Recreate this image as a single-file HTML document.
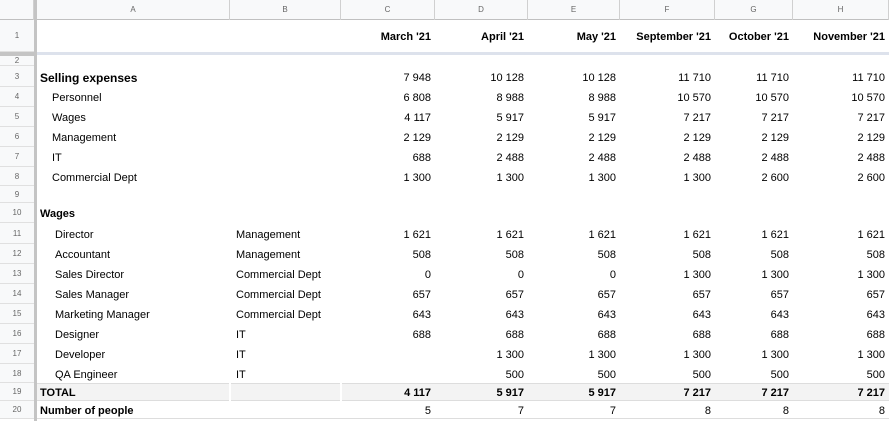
<!DOCTYPE html>
<html><head><meta charset="utf-8"><style>
*{margin:0;padding:0;box-sizing:border-box}
body{width:889px;height:421px;overflow:hidden;background:#fff;font-family:"Liberation Sans",Arial,sans-serif;font-size:11px;color:#000;position:relative}
.hdr{position:absolute;left:0;top:0;width:889px;height:20px;background:#f8f9fa;border-bottom:1px solid #c0c0c0}
.hdr div{position:absolute;top:0;height:20px;line-height:20px;text-align:center;font-size:8px;color:#666;border-right:1px solid #d0d0d0}
.rh{position:absolute;left:0;width:34px;background:#f8f9fa;border-bottom:1px solid #e0e0e0;font-size:8px;color:#666;text-align:center}
.r{position:absolute;left:37px;width:852px}
.c{position:absolute;top:1px;height:100%;white-space:nowrap;display:flex;align-items:center}
.n{justify-content:flex-end;padding-right:4px}
.b{font-weight:bold}
</style></head><body>
<div class="hdr">
<div style="left:0;width:34px"></div>
<div style="left:37px;width:193px">A</div>
<div style="left:230px;width:111px">B</div>
<div style="left:341px;width:94px">C</div>
<div style="left:435px;width:93px">D</div>
<div style="left:528px;width:92px">E</div>
<div style="left:620px;width:95px">F</div>
<div style="left:715px;width:78px">G</div>
<div style="left:793px;width:96px">H</div>
</div>
<div style="position:absolute;left:34px;top:0;width:3px;height:421px;background:#c4c4c4"></div>
<div style="position:absolute;left:0;top:52px;width:37px;height:4px;background:#c4c4c4"></div>
<div style="position:absolute;left:37px;top:52px;width:852px;height:3px;background:#dde2ec"></div>
<div style="position:absolute;left:37px;top:383px;width:852px;height:18px;background:#f3f3f3;border-top:1px solid #ddd;border-bottom:1px solid #ddd"></div>
<div style="position:absolute;left:229px;top:383px;width:2px;height:18px;background:#fff"></div>
<div style="position:absolute;left:340px;top:383px;width:2px;height:18px;background:#fff"></div>
<div style="position:absolute;left:37px;top:418px;width:852px;height:1px;background:#ddd"></div>

<div class="rh" style="top:20px;height:32px;line-height:32px">1</div>
<div class="rh" style="top:56px;height:10px;line-height:10px">2</div>
<div class="rh" style="top:66px;height:21px;line-height:21px">3</div>
<div class="rh" style="top:87px;height:20px;line-height:20px">4</div>
<div class="rh" style="top:107px;height:20px;line-height:20px">5</div>
<div class="rh" style="top:127px;height:20px;line-height:20px">6</div>
<div class="rh" style="top:147px;height:20px;line-height:20px">7</div>
<div class="rh" style="top:167px;height:19px;line-height:19px">8</div>
<div class="rh" style="top:186px;height:17px;line-height:17px">9</div>
<div class="rh" style="top:203px;height:20px;line-height:20px">10</div>
<div class="rh" style="top:223px;height:21px;line-height:21px">11</div>
<div class="rh" style="top:244px;height:20px;line-height:20px">12</div>
<div class="rh" style="top:264px;height:20px;line-height:20px">13</div>
<div class="rh" style="top:284px;height:20px;line-height:20px">14</div>
<div class="rh" style="top:304px;height:20px;line-height:20px">15</div>
<div class="rh" style="top:324px;height:20px;line-height:20px">16</div>
<div class="rh" style="top:344px;height:20px;line-height:20px">17</div>
<div class="rh" style="top:364px;height:19px;line-height:19px">18</div>
<div class="rh" style="top:383px;height:18px;line-height:18px">19</div>
<div class="rh" style="top:401px;height:18px;line-height:18px">20</div>

<div class="r b" style="top:20px;height:32px">
<div class="c n" style="left:304px;width:94px">March '21</div>
<div class="c n" style="left:398px;width:93px">April '21</div>
<div class="c n" style="left:491px;width:92px">May '21</div>
<div class="c n" style="left:583px;width:95px">September '21</div>
<div class="c n" style="left:678px;width:78px">October '21</div>
<div class="c n" style="left:756px;width:96px">November '21</div>
</div>

<div class="r" style="top:66px;height:21px"><div class="c b" style="left:3px;font-size:12px">Selling expenses</div>
<div class="c n" style="left:304px;width:94px">7 948</div><div class="c n" style="left:398px;width:93px">10 128</div><div class="c n" style="left:491px;width:92px">10 128</div><div class="c n" style="left:583px;width:95px">11 710</div><div class="c n" style="left:678px;width:78px">11 710</div><div class="c n" style="left:756px;width:96px">11 710</div></div>

<div class="r" style="top:87px;height:20px"><div class="c" style="left:15px">Personnel</div>
<div class="c n" style="left:304px;width:94px">6 808</div><div class="c n" style="left:398px;width:93px">8 988</div><div class="c n" style="left:491px;width:92px">8 988</div><div class="c n" style="left:583px;width:95px">10 570</div><div class="c n" style="left:678px;width:78px">10 570</div><div class="c n" style="left:756px;width:96px">10 570</div></div>

<div class="r" style="top:107px;height:20px"><div class="c" style="left:15px">Wages</div>
<div class="c n" style="left:304px;width:94px">4 117</div><div class="c n" style="left:398px;width:93px">5 917</div><div class="c n" style="left:491px;width:92px">5 917</div><div class="c n" style="left:583px;width:95px">7 217</div><div class="c n" style="left:678px;width:78px">7 217</div><div class="c n" style="left:756px;width:96px">7 217</div></div>

<div class="r" style="top:127px;height:20px"><div class="c" style="left:15px">Management</div>
<div class="c n" style="left:304px;width:94px">2 129</div><div class="c n" style="left:398px;width:93px">2 129</div><div class="c n" style="left:491px;width:92px">2 129</div><div class="c n" style="left:583px;width:95px">2 129</div><div class="c n" style="left:678px;width:78px">2 129</div><div class="c n" style="left:756px;width:96px">2 129</div></div>

<div class="r" style="top:147px;height:20px"><div class="c" style="left:15px">IT</div>
<div class="c n" style="left:304px;width:94px">688</div><div class="c n" style="left:398px;width:93px">2 488</div><div class="c n" style="left:491px;width:92px">2 488</div><div class="c n" style="left:583px;width:95px">2 488</div><div class="c n" style="left:678px;width:78px">2 488</div><div class="c n" style="left:756px;width:96px">2 488</div></div>

<div class="r" style="top:167px;height:19px"><div class="c" style="left:15px">Commercial Dept</div>
<div class="c n" style="left:304px;width:94px">1 300</div><div class="c n" style="left:398px;width:93px">1 300</div><div class="c n" style="left:491px;width:92px">1 300</div><div class="c n" style="left:583px;width:95px">1 300</div><div class="c n" style="left:678px;width:78px">2 600</div><div class="c n" style="left:756px;width:96px">2 600</div></div>

<div class="r" style="top:203px;height:20px"><div class="c b" style="left:3px">Wages</div></div>

<div class="r" style="top:223px;height:21px"><div class="c" style="left:18px">Director</div><div class="c" style="left:199px">Management</div>
<div class="c n" style="left:304px;width:94px">1 621</div><div class="c n" style="left:398px;width:93px">1 621</div><div class="c n" style="left:491px;width:92px">1 621</div><div class="c n" style="left:583px;width:95px">1 621</div><div class="c n" style="left:678px;width:78px">1 621</div><div class="c n" style="left:756px;width:96px">1 621</div></div>

<div class="r" style="top:244px;height:20px"><div class="c" style="left:18px">Accountant</div><div class="c" style="left:199px">Management</div>
<div class="c n" style="left:304px;width:94px">508</div><div class="c n" style="left:398px;width:93px">508</div><div class="c n" style="left:491px;width:92px">508</div><div class="c n" style="left:583px;width:95px">508</div><div class="c n" style="left:678px;width:78px">508</div><div class="c n" style="left:756px;width:96px">508</div></div>

<div class="r" style="top:264px;height:20px"><div class="c" style="left:18px">Sales Director</div><div class="c" style="left:199px">Commercial Dept</div>
<div class="c n" style="left:304px;width:94px">0</div><div class="c n" style="left:398px;width:93px">0</div><div class="c n" style="left:491px;width:92px">0</div><div class="c n" style="left:583px;width:95px">1 300</div><div class="c n" style="left:678px;width:78px">1 300</div><div class="c n" style="left:756px;width:96px">1 300</div></div>

<div class="r" style="top:284px;height:20px"><div class="c" style="left:18px">Sales Manager</div><div class="c" style="left:199px">Commercial Dept</div>
<div class="c n" style="left:304px;width:94px">657</div><div class="c n" style="left:398px;width:93px">657</div><div class="c n" style="left:491px;width:92px">657</div><div class="c n" style="left:583px;width:95px">657</div><div class="c n" style="left:678px;width:78px">657</div><div class="c n" style="left:756px;width:96px">657</div></div>

<div class="r" style="top:304px;height:20px"><div class="c" style="left:18px">Marketing Manager</div><div class="c" style="left:199px">Commercial Dept</div>
<div class="c n" style="left:304px;width:94px">643</div><div class="c n" style="left:398px;width:93px">643</div><div class="c n" style="left:491px;width:92px">643</div><div class="c n" style="left:583px;width:95px">643</div><div class="c n" style="left:678px;width:78px">643</div><div class="c n" style="left:756px;width:96px">643</div></div>

<div class="r" style="top:324px;height:20px"><div class="c" style="left:18px">Designer</div><div class="c" style="left:199px">IT</div>
<div class="c n" style="left:304px;width:94px">688</div><div class="c n" style="left:398px;width:93px">688</div><div class="c n" style="left:491px;width:92px">688</div><div class="c n" style="left:583px;width:95px">688</div><div class="c n" style="left:678px;width:78px">688</div><div class="c n" style="left:756px;width:96px">688</div></div>

<div class="r" style="top:344px;height:20px"><div class="c" style="left:18px">Developer</div><div class="c" style="left:199px">IT</div>
<div class="c n" style="left:398px;width:93px">1 300</div><div class="c n" style="left:491px;width:92px">1 300</div><div class="c n" style="left:583px;width:95px">1 300</div><div class="c n" style="left:678px;width:78px">1 300</div><div class="c n" style="left:756px;width:96px">1 300</div></div>

<div class="r" style="top:364px;height:19px"><div class="c" style="left:18px">QA Engineer</div><div class="c" style="left:199px">IT</div>
<div class="c n" style="left:398px;width:93px">500</div><div class="c n" style="left:491px;width:92px">500</div><div class="c n" style="left:583px;width:95px">500</div><div class="c n" style="left:678px;width:78px">500</div><div class="c n" style="left:756px;width:96px">500</div></div>

<div class="r b" style="top:383px;height:18px"><div class="c" style="left:3px">TOTAL</div>
<div class="c n" style="left:304px;width:94px">4 117</div><div class="c n" style="left:398px;width:93px">5 917</div><div class="c n" style="left:491px;width:92px">5 917</div><div class="c n" style="left:583px;width:95px">7 217</div><div class="c n" style="left:678px;width:78px">7 217</div><div class="c n" style="left:756px;width:96px">7 217</div></div>

<div class="r" style="top:401px;height:18px"><div class="c b" style="left:3px">Number of people</div>
<div class="c n" style="left:304px;width:94px">5</div><div class="c n" style="left:398px;width:93px">7</div><div class="c n" style="left:491px;width:92px">7</div><div class="c n" style="left:583px;width:95px">8</div><div class="c n" style="left:678px;width:78px">8</div><div class="c n" style="left:756px;width:96px">8</div></div>
</body></html>
